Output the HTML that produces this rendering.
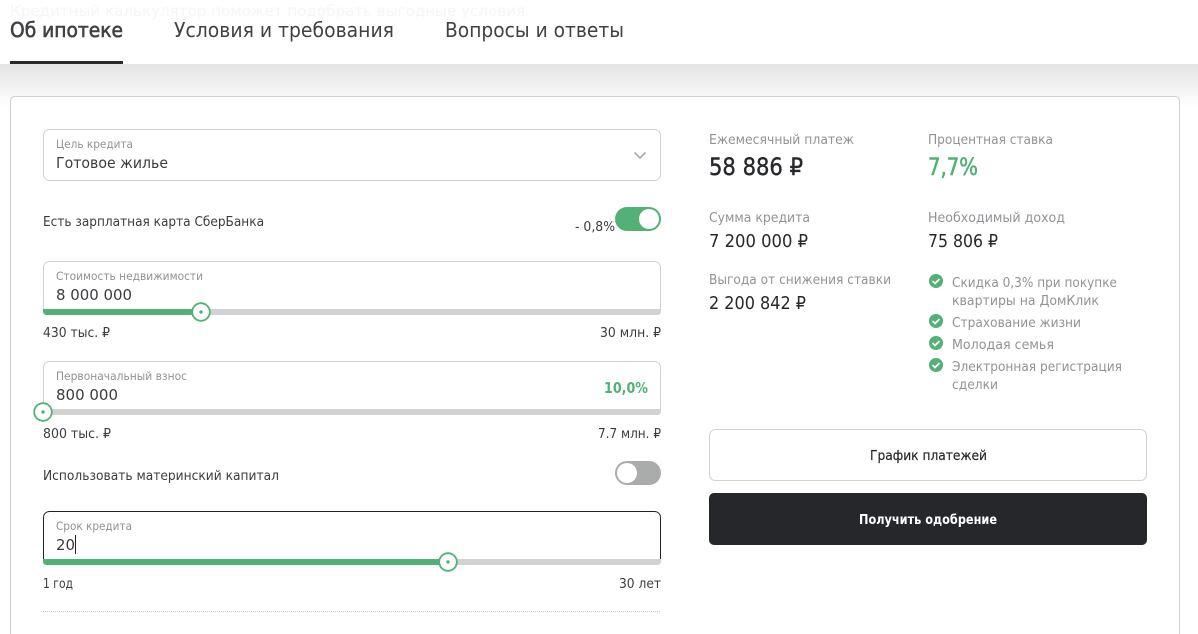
<!DOCTYPE html>
<html lang="ru"><head><meta charset="utf-8"><title>Об ипотеке</title>
<style>
html,body{margin:0;padding:0;width:1198px;height:634px;overflow:hidden;background:#fff}
svg{display:block}
text{font-family:"DejaVu Sans","Liberation Sans",sans-serif;white-space:pre}
.k{fill:#27282b}
.tab{font-size:20px;fill:#3f4144}
.lab{font-size:11.5px;fill:#8f9294}
.val{font-size:15.5px;fill:#3a3c3f}
.t{font-size:13.5px;fill:#3a3c3f}
.s{font-size:13.5px;fill:#909396}
.m{font-size:18px;fill:#27282b}
</style></head><body>
<svg width="1198" height="634" viewBox="0 0 1198 634" xmlns="http://www.w3.org/2000/svg">
<defs><linearGradient id="sh" x1="0" y1="0" x2="0" y2="1"><stop offset="0" stop-color="#e4e4e4"/><stop offset="1" stop-color="#fff"/></linearGradient></defs>
<rect x="0" y="64" width="1198" height="44" fill="url(#sh)"/>
<text x="10" y="16" font-size="15" fill="#f6f6f6" textLength="515" lengthAdjust="spacingAndGlyphs">Кредитный калькулятор поможет подобрать выгодные условия</text>
<text class="tab" x="10" y="37" textLength="113" lengthAdjust="spacingAndGlyphs" stroke="#3f4144" stroke-width=".6">Об ипотеке</text>
<text class="tab" x="174" y="37" textLength="220" lengthAdjust="spacingAndGlyphs">Условия и требования</text>
<text class="tab" x="445" y="37" textLength="179" lengthAdjust="spacingAndGlyphs">Вопросы и ответы</text>
<rect x="10" y="61" width="113" height="3" fill="#2a2a2c"/>
<path d="M10.500 634V101.500Q10.500 96.500 15.500 96.500H1174.500Q1179.500 96.500 1179.500 101.500V634" fill="#fff" stroke="#cfcfcf"/>

<rect x="43.500" y="129.500" width="617" height="51" rx="6" fill="#fff" stroke="#d2d2d2"/>
<text class="lab" x="56" y="148" textLength="77" lengthAdjust="spacingAndGlyphs">Цель кредита</text>
<text class="val" x="56" y="168" textLength="112" lengthAdjust="spacingAndGlyphs">Готовое жилье</text>
<path d="M634.500 152.500L640 158L645.500 152.500" fill="none" stroke="#a9a9a9" stroke-width="1.600"/>

<text class="t" x="43" y="226" textLength="221" lengthAdjust="spacingAndGlyphs">Есть зарплатная карта СберБанка</text>
<text class="t" x="575" y="231" textLength="40" lengthAdjust="spacingAndGlyphs">- 0,8%</text>
<rect x="615" y="207" width="46" height="24" rx="12" fill="#52b175"/>
<circle cx="649" cy="219" r="10" fill="#fff"/>

<rect x="43.500" y="261.500" width="617" height="53" rx="6" fill="#fff" stroke="#d2d2d2"/>
<text class="lab" x="56" y="280" textLength="147" lengthAdjust="spacingAndGlyphs">Стоимость недвижимости</text>
<text class="val" x="56" y="300" textLength="76" lengthAdjust="spacingAndGlyphs">8 000 000</text>
<path d="M43 309H661V311Q661 315 657 315H47Q43 315 43 311Z" fill="#d1d3d2"/>
<path d="M43 309H201V315H47Q43 315 43 311Z" fill="#52b175"/>
<circle cx="201" cy="312" r="8.800" fill="#fff" stroke="#52b175" stroke-width="1.800"/><circle cx="201" cy="312" r="1.700" fill="#52b175"/>
<text class="t" x="43" y="337" textLength="67" lengthAdjust="spacingAndGlyphs">430 тыс. ₽</text>
<text class="t" x="600" y="337" textLength="61" lengthAdjust="spacingAndGlyphs">30 млн. ₽</text>

<rect x="43.500" y="361.500" width="617" height="53" rx="6" fill="#fff" stroke="#d2d2d2"/>
<text class="lab" x="56" y="380" textLength="131" lengthAdjust="spacingAndGlyphs">Первоначальный взнос</text>
<text class="val" x="56" y="400" textLength="62" lengthAdjust="spacingAndGlyphs">800 000</text>
<text x="604" y="393" font-size="15" font-weight="700" fill="#52b175" textLength="44" lengthAdjust="spacingAndGlyphs">10,0%</text>
<path d="M43 409H661V411Q661 415 657 415H47Q43 415 43 411Z" fill="#d1d3d2"/>
<circle cx="43" cy="412" r="8.800" fill="#fff" stroke="#52b175" stroke-width="1.800"/><circle cx="43" cy="412" r="1.700" fill="#52b175"/>
<text class="t" x="43" y="438" textLength="68" lengthAdjust="spacingAndGlyphs">800 тыс. ₽</text>
<text class="t" x="598" y="438" textLength="63" lengthAdjust="spacingAndGlyphs">7.7 млн. ₽</text>

<text class="t" x="43" y="480" textLength="236" lengthAdjust="spacingAndGlyphs">Использовать материнский капитал</text>
<rect x="615" y="461" width="46" height="24" rx="12" fill="#aaabab"/>
<circle cx="627" cy="473" r="10" fill="#fff"/>

<rect x="43.500" y="511.500" width="617" height="53" rx="6" fill="#fff" stroke="#222"/>
<text class="lab" x="56" y="530" textLength="76" lengthAdjust="spacingAndGlyphs">Срок кредита</text>
<text class="val" x="56" y="550" textLength="19" lengthAdjust="spacingAndGlyphs">20</text>
<rect x="75" y="535" width="1" height="19" fill="#222"/>
<path d="M43 559H661V561Q661 565 657 565H47Q43 565 43 561Z" fill="#d1d3d2"/>
<path d="M43 559H448V565H47Q43 565 43 561Z" fill="#52b175"/>
<circle cx="448" cy="562" r="8.800" fill="#fff" stroke="#52b175" stroke-width="1.800"/><circle cx="448" cy="562" r="1.700" fill="#52b175"/>
<text class="t" x="43" y="588" textLength="30" lengthAdjust="spacingAndGlyphs">1 год</text>
<text class="t" x="619" y="588" textLength="42" lengthAdjust="spacingAndGlyphs">30 лет</text>
<line x1="43" y1="611.500" x2="661" y2="611.500" stroke="#c8c8c8" stroke-dasharray="1 1"/>

<text class="s" x="709" y="144" textLength="145" lengthAdjust="spacingAndGlyphs">Ежемесячный платеж</text>
<text x="709" y="175" font-size="24" class="k" stroke="#27282b" stroke-width=".4" textLength="94" lengthAdjust="spacingAndGlyphs">58 886 ₽</text>
<text class="s" x="928" y="144" textLength="125" lengthAdjust="spacingAndGlyphs">Процентная ставка</text>
<text x="928" y="175" font-size="24" fill="#52b175" stroke="#52b175" stroke-width=".6" textLength="50" lengthAdjust="spacingAndGlyphs">7,7%</text>
<text class="s" x="709" y="222" textLength="101" lengthAdjust="spacingAndGlyphs">Сумма кредита</text>
<text class="s" x="928" y="222" textLength="137" lengthAdjust="spacingAndGlyphs">Необходимый доход</text>
<text class="m" x="709" y="247" textLength="99" lengthAdjust="spacingAndGlyphs">7 200 000 ₽</text>
<text class="m" x="928" y="247" textLength="70" lengthAdjust="spacingAndGlyphs">75 806 ₽</text>
<text class="s" x="709" y="284" textLength="182" lengthAdjust="spacingAndGlyphs">Выгода от снижения ставки</text>
<text class="m" x="709" y="309" textLength="97" lengthAdjust="spacingAndGlyphs">2 200 842 ₽</text>

<g fill="#52b175"><circle cx="936" cy="281" r="7"/><circle cx="936" cy="321" r="7"/><circle cx="936" cy="343" r="7"/><circle cx="936" cy="365" r="7"/></g>
<g fill="none" stroke="#fff" stroke-width="1.800">
<path d="M932.500 281L935 283.500L939.500 279"/><path d="M932.500 321L935 323.500L939.500 319"/><path d="M932.500 343L935 345.500L939.500 341"/><path d="M932.500 365L935 367.500L939.500 363"/>
</g>
<text class="s" x="952" y="287" textLength="165" lengthAdjust="spacingAndGlyphs">Скидка 0,3% при покупке</text>
<text class="s" x="952" y="305" textLength="147" lengthAdjust="spacingAndGlyphs">квартиры на ДомКлик</text>
<text class="s" x="952" y="327" textLength="129" lengthAdjust="spacingAndGlyphs">Страхование жизни</text>
<text class="s" x="952" y="349" textLength="102" lengthAdjust="spacingAndGlyphs">Молодая семья</text>
<text class="s" x="952" y="371" textLength="170" lengthAdjust="spacingAndGlyphs">Электронная регистрация</text>
<text class="s" x="952" y="389" textLength="46" lengthAdjust="spacingAndGlyphs">сделки</text>

<rect x="709.500" y="429.500" width="437" height="51" rx="6" fill="#fff" stroke="#d2d2d2"/>
<text x="870" y="460" font-size="13" class="k" stroke="#27282b" stroke-width=".2" textLength="117" lengthAdjust="spacingAndGlyphs">График платежей</text>
<rect x="709" y="493" width="438" height="52" rx="5" fill="#26272b"/>
<text x="859" y="524" font-size="13" font-weight="700" fill="#fff" textLength="138" lengthAdjust="spacingAndGlyphs">Получить одобрение</text>
</svg>
</body></html>
